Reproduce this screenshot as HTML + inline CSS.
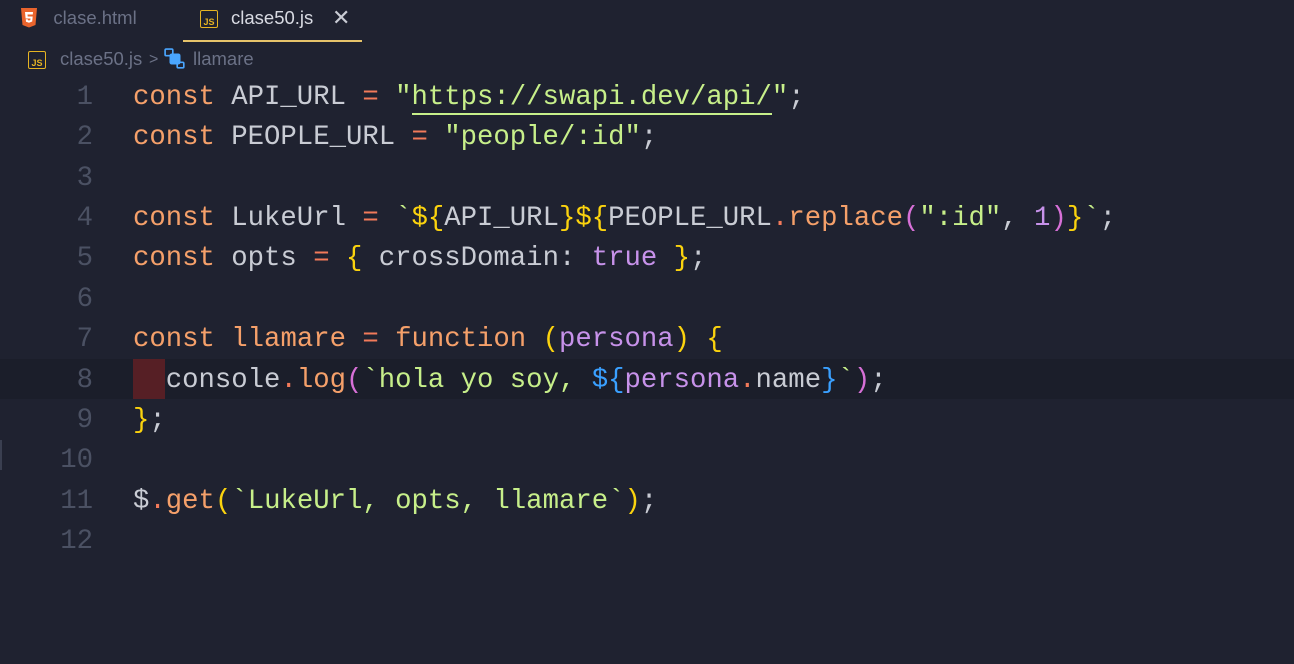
<!DOCTYPE html>
<html><head><meta charset="utf-8"><style>
body{margin:0;width:1294px;height:664px;background:#1f2230;overflow:hidden;font-family:"Liberation Sans",sans-serif}
.tabs{position:absolute;top:0;left:0;right:0;height:42px}
.tab{position:absolute;top:0;height:38px;line-height:36px;font-size:18.5px;color:#6b7186}
.bc{position:absolute;top:46px;left:28px;font-size:18.5px;color:#6b7186;line-height:26px}
.js{display:inline-block;width:18px;height:18px;border:1.5px solid #e6b422;border-radius:2px;color:#e6b422;font-size:9px;line-height:22px;text-align:center;font-weight:bold;vertical-align:middle;box-sizing:border-box}
.code{position:absolute;top:78px;left:0;font-family:"Liberation Mono",monospace;font-size:27.3px;line-height:40.36px;white-space:pre;color:#c9ccd4}
.ln{position:absolute;left:0;width:93px;text-align:right;color:#4b5163}
.l{position:absolute;left:133px}
.k{color:#f5a06a}.o{color:#f27a5a}.s{color:#c7ef8a}.y{color:#fbd30e}.p{color:#c792ea}.b{color:#3aa0ff}.m{color:#d770d7}.w{color:#c9ccd4}.f{color:#f5a06a}
</style></head><body>
<div class="tabs">
<div class="tab" style="left:20px"><svg width="18" height="20" viewBox="0 0 18 20" style="vertical-align:-4px"><path d="M1 0h16l-1.5 17L9 19.5 2.5 17z" fill="#e9642d"/><path d="M5 4h8l-.2 2.5H7.5l.2 2h5l-.5 5L9 14.7l-3-1-.2-2.5h2l.1 1L9 12.5l1.3-.4.2-1.6H5.6z" fill="#fff"/></svg>&nbsp;&nbsp; clase.html</div>
<div class="tab" style="left:200px;color:#d8dae2"><span class="js">JS</span><span style="position:absolute;left:31px;top:0">clase50.js</span><span style="position:absolute;left:132px;top:0;color:#c9ccd4;font-size:22px">✕</span></div>
<div style="position:absolute;left:183px;top:40px;width:179px;height:1.5px;background:#e6c36a"></div>
</div>
<div class="bc"><span class="js">JS</span><span style="position:absolute;left:32px;top:0">clase50.js</span><span style="position:absolute;left:121px;top:1px;font-size:16px">&gt;</span><svg width="22" height="22" viewBox="0 0 20 20" style="position:absolute;left:136px;top:2px"><rect x="1" y="1" width="7" height="6" rx="1" fill="none" stroke="#4aa6ff" stroke-width="1.5"/><rect x="5" y="5" width="10" height="10" rx="2" fill="#4aa6ff"/><rect x="12" y="13" width="6" height="5" rx="1" fill="none" stroke="#4aa6ff" stroke-width="1.5"/></svg><span style="position:absolute;left:165px;top:0">llamare</span></div>
<div style="position:absolute;left:0;top:359px;width:1294px;height:40px;background:#1b1e2a"></div>
<div style="position:absolute;left:133px;top:359px;width:32px;height:40px;background:#561f25"></div>
<div style="position:absolute;left:0;top:440px;width:2px;height:30px;background:#3a3f50"></div>
<div class="code">
<div class="ln" style="top:0">1</div><div class="ln" style="top:40.36px">2</div><div class="ln" style="top:80.72px">3</div><div class="ln" style="top:121.08px">4</div><div class="ln" style="top:161.44px">5</div><div class="ln" style="top:201.8px">6</div><div class="ln" style="top:242.16px">7</div><div class="ln" style="top:282.52px">8</div><div class="ln" style="top:322.88px">9</div><div class="ln" style="top:363.24px">10</div><div class="ln" style="top:403.6px">11</div><div class="ln" style="top:443.96px">12</div>
<div class="l" style="top:0"><span class="k">const</span> API_URL <span class="o">=</span> <span class="s">"<span style="border-bottom:2px solid #c7ef8a">https://swapi.dev/api/</span>"</span>;</div>
<div class="l" style="top:40.36px"><span class="k">const</span> PEOPLE_URL <span class="o">=</span> <span class="s">"people/:id"</span>;</div>
<div class="l" style="top:121.08px"><span class="k">const</span> LukeUrl <span class="o">=</span> <span class="s">`</span><span class="y">${</span>API_URL<span class="y">}${</span>PEOPLE_URL<span class="o">.</span><span class="f">replace</span><span class="m">(</span><span class="s">":id"</span>, <span class="p">1</span><span class="m">)</span><span class="y">}</span><span class="s">`</span>;</div>
<div class="l" style="top:161.44px"><span class="k">const</span> opts <span class="o">=</span> <span class="y">{</span> crossDomain: <span class="p">true</span> <span class="y">}</span>;</div>
<div class="l" style="top:242.16px"><span class="k">const</span> <span class="f">llamare</span> <span class="o">=</span> <span class="k">function</span> <span class="y">(</span><span class="p">persona</span><span class="y">)</span> <span class="y">{</span></div>
<div class="l" style="top:282.52px">  console<span class="o">.</span><span class="f">log</span><span class="m">(</span><span class="s">`hola yo soy, </span><span class="b">${</span><span class="p">persona</span><span class="o">.</span>name<span class="b">}</span><span class="s">`</span><span class="m">)</span>;</div>
<div class="l" style="top:322.88px"><span class="y">}</span>;</div>
<div class="l" style="top:403.6px">$<span class="o">.</span><span class="f">get</span><span class="y">(</span><span class="s">`LukeUrl, opts, llamare`</span><span class="y">)</span>;</div>
</div>
</body></html>
